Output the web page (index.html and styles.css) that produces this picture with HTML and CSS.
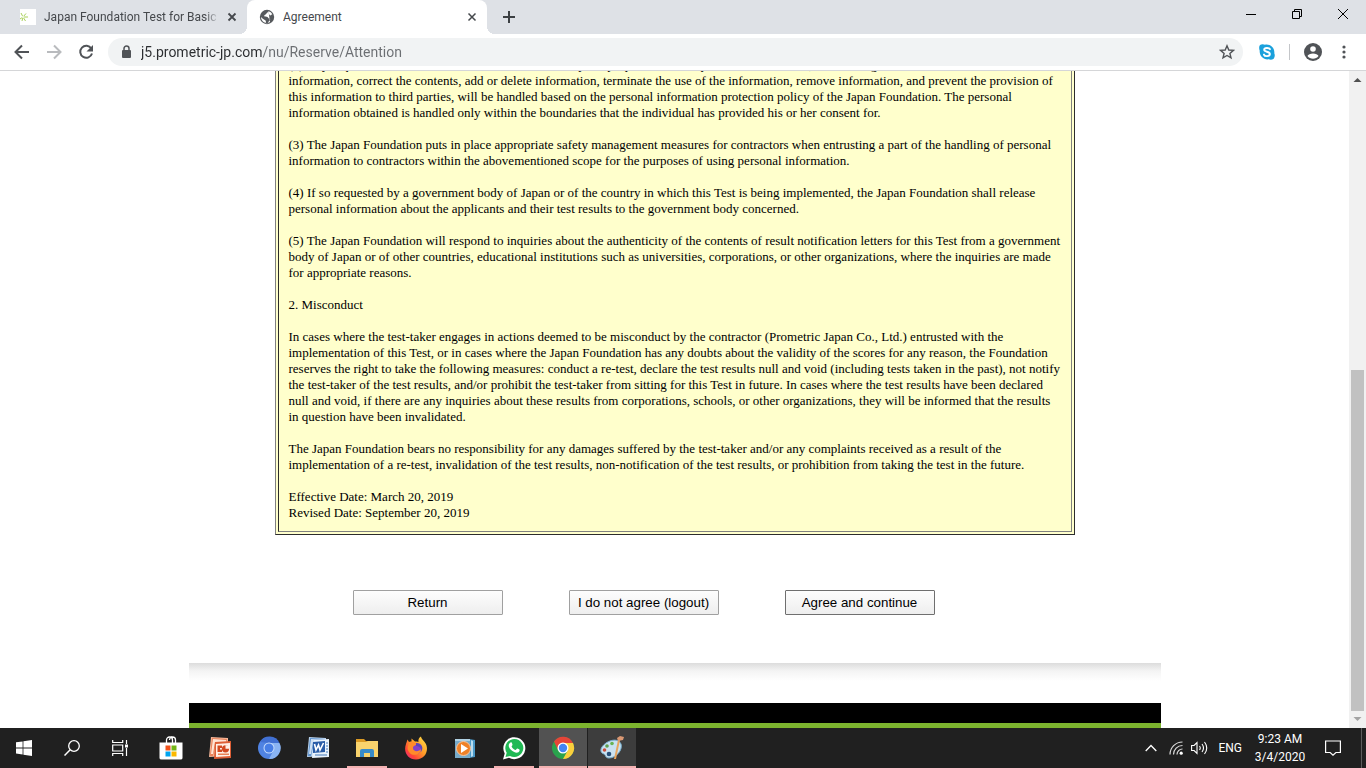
FILE: index.html
```
<!DOCTYPE html>
<html lang="en">
<head>
  <meta charset="UTF-8" />
  <meta name="viewport" content="width=device-width, initial-scale=1.0"/>
  <title>Agreement</title>
  <link rel="stylesheet" href="styles.css">
</head>
<body>

  <header class="tab-strip">
    <div class="tab">
      <svg class="favicon" width="16" height="16" viewBox="0 0 16 16"><rect width="16" height="16" fill="#fff"/><path d="M3 8L1 4M3 8L0 10M3 8l-1 4M3 8l3-3.500M3 8l2.500 4M3 8h5" fill="none" stroke="#a9d15c"/><circle cx="3" cy="8" r="1" fill="#fff"/></svg>
      <span class="tab-title fade">Japan Foundation Test for Basic J</span>
      <button class="tab-close" aria-label="Close tab"><svg width="10" height="10" viewBox="0 0 10 10"><path d="M1.500 1.500l7 7M8.500 1.500l-7 7" stroke="#45484c" stroke-width="1.800"/></svg></button>
    </div>
    <div class="tab active">
      <svg class="favicon" width="16" height="16" viewBox="0 0 16 16"><circle cx="8" cy="8" r="7.200" fill="#56595d"/><path d="M9.500 2.300C9 3.500 8 3.500 7.500 4.500 7 6 5 5.500 5.200 7c.2 1 2.300.5 3.300 1 .8.500.8 1.500 2 1.600 1 .1.800 1.400 0 2-.8.700-1 1.800-2 2.600a6 6 0 0 1-1.700-.2c-.1-1 .5-1.800-.3-2.500C5.300 10.500 3 9.500 2 8c0 3.300 2.700 6 6 6 1 0 2-.3 3-1" fill="#fff"/><path d="M9.500 2.300c1.700.4 3 1.500 3.800 3-1 .5-1.600 1.400-2.500 1-.8-.5-.3-1.500-1.300-2z" fill="#fff"/></svg>
      <span class="tab-title">Agreement</span>
      <button class="tab-close" aria-label="Close tab"><svg width="10" height="10" viewBox="0 0 10 10"><path d="M1.500 1.500l7 7M8.500 1.500l-7 7" stroke="#45484c" stroke-width="1.500"/></svg></button>
    </div>
    <button class="new-tab" aria-label="New tab"><svg width="12" height="12" viewBox="0 0 12 12"><path d="M6 0v12M0 6h12" stroke="#3c4043" stroke-width="2"/></svg></button>
    <div class="window-btns">
      <button aria-label="Minimize"><svg width="10" height="10" viewBox="0 0 10 10"><path d="M0 5.500h10" stroke="#000"/></svg></button>
      <button aria-label="Restore"><svg width="10" height="10" viewBox="0 0 10 10"><path d="M.5 2.500h7v7h-7zM2.500 2.500v-2h7v7h-2" fill="none" stroke="#000"/></svg></button>
      <button aria-label="Close"><svg width="10" height="10" viewBox="0 0 10 10"><path d="M0 0l10 10M10 0L0 10" stroke="#000"/></svg></button>
    </div>
  </header>

  <nav class="toolbar">
    <button aria-label="Back"><svg width="16" height="16" viewBox="0 0 16 16"><path d="M15 8H2M8 1.500L1.500 8 8 14.500" fill="none" stroke="#505357" stroke-width="2"/></svg></button>
    <button aria-label="Forward"><svg width="16" height="16" viewBox="0 0 16 16"><path d="M1 8h13M8 1.500L14.500 8 8 14.500" fill="none" stroke="#b9bbbe" stroke-width="2"/></svg></button>
    <button aria-label="Reload"><svg width="16" height="16" viewBox="0 0 16 16"><path d="M13.300 4.500A6 6 0 1 0 14 9.500" fill="none" stroke="#505357" stroke-width="2"/><path d="M15 1v6.500H8.500z" fill="#505357"/></svg></button>
    <div class="address">
      <svg width="10" height="14" viewBox="0 0 10 14"><rect x="1" y="5" width="9" height="8" rx="1" fill="#505357"/><path d="M3 6V3.500a2.500 2.500 0 0 1 5 0V6" fill="none" stroke="#505357" stroke-width="1.500"/></svg>
      <input type="text" aria-label="Address" value="j5.prometric-jp.com/nu/Reserve/Attention">
      <button class="star" aria-label="Bookmark"><svg width="16" height="16" viewBox="0 0 16 16"><path d="M8 1.800l1.800 4.200 4.600.4-3.500 3 1.100 4.500L8 11.500l-4 2.400 1.100-4.500-3.500-3L6.200 6z" fill="none" stroke="#505357" stroke-width="1.400"/></svg></button>
    </div>
    <div class="tool-icons">
      <button aria-label="Skype"><svg width="16" height="16" viewBox="0 0 16 16"><path d="M1 1C3-.5 5 .3 6 .7c5-1 10 3 9.300 8.600C16 11 16 13 14.700 14.700 13 16 11 15.800 9.700 15.300 4.500 16 .2 12 .7 6.700 0 5-.2 2.500 1 1z" fill="#1ba1dc"/><path d="M11 5.200C10.300 3.600 5.200 3.300 5.200 5.800c0 2.400 5.700 1.500 5.700 4.300 0 2.700-5.300 2.600-6 .5" fill="none" stroke="#fff" stroke-width="1.900" stroke-linecap="round"/></svg></button>
      <span class="divider"></span>
      <button aria-label="Profile"><svg width="18" height="18" viewBox="0 0 18 18"><circle cx="9" cy="9" r="9" fill="#505357"/><circle cx="9" cy="6" r="2.800" fill="#fff"/><path d="M3.500 13c1-3.500 10-3.500 11 0-2.500 3.600-8.500 3.600-11 0z" fill="#fff"/></svg></button>
      <button aria-label="Menu"><svg width="4" height="14" viewBox="0 0 4 14"><g fill="#505357"><circle cx="2" cy="2" r="1.600"/><circle cx="2" cy="7" r="1.600"/><circle cx="2" cy="12" r="1.600"/></g></svg></button>
    </div>
  </nav>

  <div class="viewport">
    <main class="page">
      <div class="agreement">
        <div class="agreement-text">
          <p>(2) Any requests from the individual to disclose or notify the purpose of use of personal information, disclose registered<br>
          information, correct the contents, add or delete information, terminate the use of the information, remove information, and prevent the provision of<br>
          this information to third parties, will be handled based on the personal information protection policy of the Japan Foundation. The personal<br>
          information obtained is handled only within the boundaries that the individual has provided his or her consent for.</p>

          <p>(3) The Japan Foundation puts in place appropriate safety management measures for contractors when entrusting a part of the handling of personal<br>
          information to contractors within the abovementioned scope for the purposes of using personal information.</p>

          <p>(4) If so requested by a government body of Japan or of the country in which this Test is being implemented, the Japan Foundation shall release<br>
          personal information about the applicants and their test results to the government body concerned.</p>

          <p>(5) The Japan Foundation will respond to inquiries about the authenticity of the contents of result notification letters for this Test from a government<br>
          body of Japan or of other countries, educational institutions such as universities, corporations, or other organizations, where the inquiries are made<br>
          for appropriate reasons.</p>

          <p>2. Misconduct</p>

          <p>In cases where the test-taker engages in actions deemed to be misconduct by the contractor (Prometric Japan Co., Ltd.) entrusted with the<br>
          implementation of this Test, or in cases where the Japan Foundation has any doubts about the validity of the scores for any reason, the Foundation<br>
          reserves the right to take the following measures: conduct a re-test, declare the test results null and void (including tests taken in the past), not notify<br>
          the test-taker of the test results, and/or prohibit the test-taker from sitting for this Test in future. In cases where the test results have been declared<br>
          null and void, if there are any inquiries about these results from corporations, schools, or other organizations, they will be informed that the results<br>
          in question have been invalidated.</p>

          <p>The Japan Foundation bears no responsibility for any damages suffered by the test-taker and/or any complaints received as a result of the<br>
          implementation of a re-test, invalidation of the test results, non-notification of the test results, or prohibition from taking the test in the future.</p>

          <p>Effective Date: March 20, 2019<br>
          Revised Date: September 20, 2019</p>
        </div>
      </div>

      <div class="choices">
        <button>Return</button>
        <button>I do not agree (logout)</button>
        <button class="agree">Agree and continue</button>
      </div>

      <footer class="footer">
        <div class="footer-shade"></div>
        <div class="footer-bar"></div>
      </footer>
    </main>

    <div class="scrollbar">
      <svg width="17" height="17" viewBox="0 0 17 17"><path d="M4.500 11l4-4 4 4z" fill="#505050"/></svg>
      <div class="track"><div class="thumb"></div></div>
      <svg width="17" height="17" viewBox="0 0 17 17"><path d="M4.500 6l4 4 4-4z" fill="#a3a3a3"/></svg>
    </div>
  </div>

  <div class="taskbar">
    <div class="system">
      <button aria-label="Start"><svg width="16" height="16" viewBox="0 0 16 16"><path d="M0 2.300l6.600-.9v6.100H0zM7.400 1.300L16 0v7.500H7.400zM0 8.400h6.600v6.100L0 13.600zM7.400 8.400H16V16l-8.600-1.300z" fill="#fff"/></svg></button>
      <button aria-label="Search"><svg width="16" height="16" viewBox="0 0 16 16"><circle cx="10" cy="6" r="5.300" fill="none" stroke="#fff" stroke-width="1.300"/><path d="M6.200 9.800L.5 15.500" stroke="#fff" stroke-width="1.500"/></svg></button>
      <button aria-label="Task view"><svg width="16" height="16" viewBox="0 0 16 16"><path d="M.7 0v2.500h10V0M.7 16v-2.500h10V16M.7 5h10v6H.7zM14.500 0v4M14.500 8v8" fill="none" stroke="#fff" stroke-width="1.200"/><rect x="13" y="4.500" width="3" height="3" fill="#fff"/></svg></button>
    </div>
    <div class="apps">
      <button aria-label="Store"><svg width="24" height="24" viewBox="0 0 24 24"><path d="M7.500 7V4a3 3 0 0 1 6 0v3M10.500 4a3 3 0 0 1 6 0v3" fill="none" stroke="#fff" stroke-width="1.300"/><path d="M.5 6.500h23V22q0 1.500-2 1.500h-19q-2 0-2-1.500z" fill="#fff"/><path d="M6.500 9.500h5v5h-5z" fill="#f1511b"/><path d="M12.500 9.500h5v5h-5z" fill="#72b515"/><path d="M6.500 15.500h5v5h-5z" fill="#00a4ef"/><path d="M12.500 15.500h5v5h-5z" fill="#fbb900"/></svg></button>
      <button aria-label="PowerPoint"><svg width="24" height="24" viewBox="0 0 24 24"><path d="M3 1l17 1v18L1 21z" fill="#f6b798"/><path d="M4 2l15 1-1 4H8L5 20H2z" fill="#e8825a"/><path d="M5 3l13 1v2H7L5 18H3z" fill="#ffe4d4"/><path d="M7 6l16-1v17l-17 1z" fill="#dd5f36"/><path d="M8 8l14-1v13l-14 1z" fill="#fff0e6"/><path d="M9.500 9.500h4.500v2.500h-2v1.500h2V16H9.500z" fill="#d24920"/><circle cx="17.500" cy="12.800" r="3.600" fill="#d24920"/><path d="M17.500 12.800V9l3.800 1v2.800z" fill="#fff0e6"/><path d="M10 17.500h11v1.500H10z" fill="#eb8255"/></svg></button>
      <button aria-label="Chromium"><svg width="24" height="24" viewBox="0 0 24 24"><circle cx="12" cy="12" r="11" fill="#5083e2"/><path d="M12 7h10.500A11 11 0 0 1 12 23l4.500-8.500z" fill="#8ab4f3"/><path d="M3 6a11 11 0 0 1 19.500 1H12z" fill="#4170d2"/><circle cx="12" cy="12" r="5.500" fill="#c6dcfb"/><circle cx="12" cy="12" r="4.500" fill="#477ee6"/></svg></button>
      <button aria-label="Word"><svg width="24" height="24" viewBox="0 0 24 24"><path d="M3 1l17 1v18L1 21z" fill="#b8d2ed"/><path d="M4 2l15 1-1 4H8L5 20H2z" fill="#5f93cf"/><path d="M5 3l13 1v2H7L5 18H3z" fill="#cfe0f3"/><path d="M8 4l15-1v18l-17 1z" fill="#eaf3fc"/><path d="M7 6l12-1v11l-12 1z" fill="#295ca7"/><path d="M8.500 8l1.500 6 2.500-5 1.500 5 3.500-7" fill="none" stroke="#fff" stroke-width="1.600"/><path d="M9 19h12M20 7h2M20 10h2M20 13h2M20 16h2" stroke="#477aba"/></svg></button>
      <button class="running" aria-label="File Explorer"><svg width="24" height="24" viewBox="0 0 24 24"><path d="M1 3h8l2 2h12v5H1z" fill="#dc9b24"/><path d="M1 6h10l2-1h10v16H1z" fill="#f9d36d"/><path d="M5 21v-6q0-2 2-2h10q2 0 2 2v6h-4v-4H9v4z" fill="#388bc9"/></svg></button>
      <button aria-label="Firefox"><svg width="24" height="24" viewBox="0 0 24 24"><defs><linearGradient id="fire" x1="1" y1="0" x2="0" y2="1"><stop offset="0" stop-color="#ffe54a"/><stop offset=".45" stop-color="#ff9a28"/><stop offset=".75" stop-color="#ff4438"/><stop offset="1" stop-color="#e4268e"/></linearGradient></defs><path d="M3.500 3.500L5 6l2.500-.5V2.500L11 5.500c1 0 2.500 0 3.500.5C14 3.500 15 1.500 17 .5c.5 3.500 4.500 5 5.500 9 2 7-2.500 14-10.500 14S-1 16 2 8z" fill="url(#fire)"/><circle cx="12" cy="12.500" r="5.500" fill="#8442c9"/><path d="M5 6c4-1 6 1 8 2-1 2-4 1-4 4 0 4 6 4 8 1 0 6-9 8-12 3C2 12 5 9 5 6z" fill="#ff8b2b"/><path d="M12 7c6 0 8 5 5 9 1-4-2-6-5-6z" fill="#5a45bb"/></svg></button>
      <button aria-label="Media Player"><svg width="24" height="24" viewBox="0 0 24 24"><path d="M16 3l6 1v17l-6 1z" fill="#4b99c8"/><path d="M18 4l2 1v15l-2 1z" fill="#b8ddf1"/><path d="M2 3h15v19H2z" fill="#78abc9"/><path d="M2 3h15v2H2z" fill="#b1d2e4"/><circle cx="10.500" cy="12.500" r="7" fill="#ef8127" stroke="#f9c7a0"/><path d="M8 8v9l7-4.500z" fill="#fff"/></svg></button>
      <button class="running" aria-label="WhatsApp"><svg width="24" height="24" viewBox="0 0 24 24"><path d="M1 23.500l1.700-6A11 11 0 1 1 7 21.800z" fill="#fff"/><path d="M3.500 21l1.200-4.200A9 9 0 1 1 8 19.900z" fill="#20b954"/><path d="M8.500 6.500c1-.4 1.300 0 2 2.200.2.700-1.200 1.400-.8 2 1 1.800 2 2.500 3.700 3.200.8.200 1.300-1.600 1.900-1.400 2.300 1 2.500 1.200 2.300 2-.6 2.300-3.200 2.700-5.400 1.600-2.600-1.100-4.500-3-5.300-5.300-.5-1.600.2-3.700 1.600-4.300z" fill="#fff"/></svg></button>
      <button class="running open focused" aria-label="Chrome"><svg width="24" height="24" viewBox="0 0 24 24"><circle cx="12" cy="12" r="11" fill="#2aa34d"/><path d="M12 7h10A11 11 0 0 1 12 23l5-9z" fill="#fbcf3c"/><path d="M3 5.500A11 11 0 0 1 22 7H12l-5 7z" fill="#e54538"/><circle cx="12" cy="12" r="5.500" fill="#fff"/><circle cx="12" cy="12" r="4.200" fill="#4285f4"/></svg></button>
      <button class="running open" aria-label="Paint"><svg width="24" height="24" viewBox="0 0 24 24"><path d="M6 7c6-4 13-4 15 1 2 6-5 14-12 14-4 0-3-3-5-4-4-1-5-6 2-11z" fill="#c9e2f1" stroke="#78aece"/><circle cx="7" cy="10" r="1.800" fill="#5da04d"/><circle cx="12" cy="7.500" r="1.800" fill="#68b354"/><circle cx="4.500" cy="14" r="1.800" fill="#ca4e3b"/><circle cx="9" cy="18" r="2.300" fill="#274f79"/><path d="M20 4l-4 19h-2l4-19z" fill="#e7a55e"/><path d="M17 2l3-2 4 1-1 3-5 1z" fill="#d99873"/></svg></button>
    </div>
    <div class="tray">
      <svg class="tray-arrow" width="12" height="8" viewBox="0 0 12 8"><path d="M.7 7L6 1.500 11.300 7" fill="none" stroke="#fff" stroke-width="1.300"/></svg>
      <svg width="14" height="14" viewBox="0 0 14 14"><path d="M1 13.500A12.500 12.500 0 0 1 13.500 1M4.500 13.500a9 9 0 0 1 9-9M8 13.500A5.500 5.500 0 0 1 13.500 8" fill="none" stroke="#ddd" stroke-width="1.200"/><circle cx="12.200" cy="12.200" r="1.600" fill="#fff"/></svg>
      <svg width="17" height="14" viewBox="0 0 17 14"><path d="M.6 4.500h2.500L6 1.500v11l-2.900-3H.6zM8.500 5q1.500 2 0 4M11 3q3 4 0 8M13.500 1q4.500 6 0 12" fill="none" stroke="#fff" stroke-width="1.100"/></svg>
      <span class="lang">ENG</span>
      <div class="clock">9:23 AM<br>3/4/2020</div>
      <button aria-label="Notifications"><svg width="16" height="16" viewBox="0 0 16 16"><path d="M.6 1h14.800v11.500h-4.500L8 15.200l-2.800-2.700H.6z" fill="none" stroke="#fff" stroke-width="1.200"/></svg></button>
    </div>
    <button class="show-desktop" aria-label="Show desktop"></button>
  </div>

</body>
</html>
```
FILE: styles.css
```
* {
  box-sizing: border-box;
}

body {
  margin: 0;
  height: 100vh;
  display: flex;
  flex-direction: column;
  overflow: hidden;
  background: white;
  font-family: Roboto, "Open Sans", sans-serif;
  font-size: 12px;
}

button {
  padding: 0;
  border: none;
  background: none;
}

svg {
  display: block;
  flex: none;
}

/* Tabs */
.tab-strip {
  height: 34px;
  flex: none;
  display: flex;
  background: #dee1e6;
}

.tab {
  width: 240px;
  display: flex;
  align-items: center;
  padding: 0 10px 0 12px;
  color: #45484c;
}

.tab:first-child {
  width: 247px;
  padding-left: 20px;
}

.tab.active {
  position: relative;
  background: white;
  border-radius: 8px 8px 0 0;
}

.tab.active::before,
.tab.active::after {
  content: "";
  position: absolute;
  bottom: 0;
  width: 8px;
  height: 8px;
}

.tab.active::before {
  right: 100%;
  background: radial-gradient(circle at 0 0, transparent 8px, white 8px);
}

.tab.active::after {
  left: 100%;
  background: radial-gradient(circle at 100% 0, transparent 8px, white 8px);
}

.tab-title {
  flex: 1;
  margin-left: 8px;
  white-space: nowrap;
  overflow: hidden;
}

.tab-title.fade {
  -webkit-mask-image: linear-gradient(to right, #000 92%, transparent);
  mask-image: linear-gradient(to right, #000 92%, transparent);
}

.tab-close {
  margin-left: 8px;
}

.new-tab {
  width: 44px;
  display: flex;
  align-items: center;
  justify-content: center;
}

.window-btns {
  margin-left: auto;
  display: flex;
  height: 28px;
}

.window-btns button {
  width: 46px;
  display: flex;
  align-items: center;
  justify-content: center;
}

/* Address row */
.toolbar {
  height: 37px;
  flex: none;
  display: flex;
  align-items: center;
  gap: 16px;
  padding: 0 20px 0 14px;
  border-bottom: 1px solid #d5d6d8;
}

.address {
  flex: 1;
  height: 28px;
  display: flex;
  align-items: center;
  gap: 10px;
  margin-left: -2px;
  padding: 0 8px 0 13px;
  border-radius: 14px;
  background: #f1f3f4;
}

.address input {
  flex: 1;
  border: none;
  outline: none;
  padding: 0;
  font: 14px Roboto, "Open Sans", sans-serif;
  color: transparent;
  background: linear-gradient(to right, #2b2d30 122px, #6b6e72 122px);
  -webkit-background-clip: text;
  background-clip: text;
}

.tool-icons {
  display: flex;
  align-items: center;
  gap: 14px;
}

.tool-icons button:last-child {
  margin-left: 6px;
}

.divider {
  width: 1px;
  height: 16px;
  background: #c4c6c9;
}

/* Page */
.viewport {
  flex: 1;
  min-height: 0;
  display: flex;
}

.page {
  flex: 1;
  display: flex;
  flex-direction: column;
  justify-content: flex-end;
  align-items: center;
  overflow: hidden;
}

.agreement {
  width: 800px;
  max-width: 100%;
  padding: 2px;
  border: 1px solid;
  border-color: #808080 #2c2c2c #2c2c2c #808080;
  background: #ffffcc;
}

.agreement-text {
  padding: 10px;
  border: 1px solid;
  border-color: #2c2c2c #808080 #808080 #2c2c2c;
  font-family: "Liberation Serif", serif;
  font-size: 13px;
  line-height: 16px;
  white-space: nowrap;
}

.agreement-text p {
  margin: 0 0 16px;
}

.agreement-text p:last-child {
  margin-bottom: 0;
}

.choices {
  width: 972px;
  max-width: 100%;
  display: flex;
  gap: 66px;
  padding: 55px 0 48px 164px;
}

.choices button {
  width: 150px;
  height: 25px;
  border: 1px solid #a0a0a0;
  border-radius: 1px;
  background: linear-gradient(#fdfdfd, #eeeeee);
  color: black;
  font-family: "Liberation Sans", sans-serif;
}

.choices .agree {
  border-color: #6f6f6f;
}

.footer {
  width: 972px;
  max-width: 100%;
}

.footer-shade {
  height: 40px;
  background: linear-gradient(#dcdcdc, #f4f4f4 8px, white 18px);
}

.footer-bar {
  height: 25px;
  background: black;
  border-bottom: 5px solid #7cb32e;
}

.scrollbar {
  width: 17px;
  display: flex;
  flex-direction: column;
  background: #f1f1f1;
}

.track {
  flex: 1;
  display: flex;
  align-items: flex-end;
  padding: 0 2px;
}

.thumb {
  width: 100%;
  height: calc(55% - 2px);
  background: #c1c1c1;
}

/* Taskbar */
.taskbar {
  height: 40px;
  flex: none;
  display: flex;
  background: #202020;
  color: white;
}

.system,
.apps {
  display: flex;
}

.apps {
  gap: 1px;
  margin-left: 3px;
}

.system button,
.apps button {
  width: 48px;
  display: flex;
  align-items: center;
  justify-content: center;
}

.apps .running {
  background: linear-gradient(#f3b1b1, #f3b1b1) bottom / 40px 2px no-repeat;
}

.apps .open {
  background-color: #3d3d3d;
  background-size: 100% 2px;
}

.apps .focused {
  background-color: #525252;
}

.tray {
  margin-left: auto;
  display: flex;
  align-items: center;
  gap: 8px;
  padding-right: 20px;
}

.tray-arrow {
  margin-right: 4px;
}

.lang {
  margin: 0 2px;
}

.clock {
  width: 56px;
  margin-right: 9px;
  line-height: 18px;
  text-align: center;
}

.show-desktop {
  width: 5px;
  border-left: 1px solid #5c5c5c;
}
```
